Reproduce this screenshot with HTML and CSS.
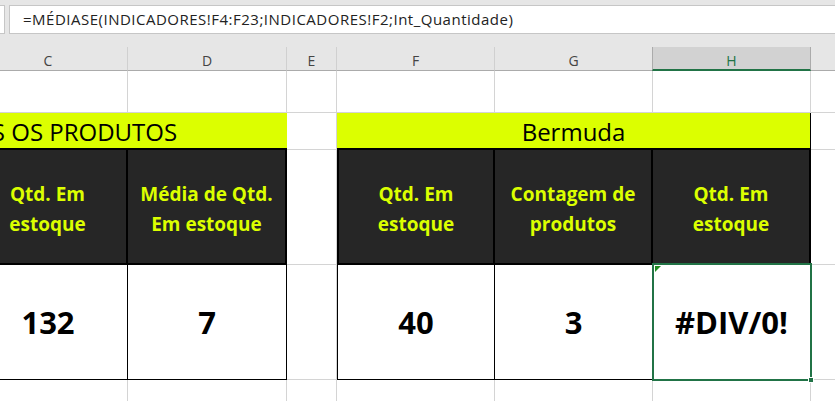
FILE: index.html
```html
<!DOCTYPE html>
<html lang="pt">
<head>
<meta charset="utf-8">
<title>Planilha</title>
<link rel="stylesheet" href="styles.css">
</head>
<body>
<div class="formula-bar">
  <div class="name-box"></div>
  <div class="fx-input">=MÉDIASE(INDICADORES!F4:F23;INDICADORES!F2;Int_Quantidade)</div>
</div>
<div class="viewport">
  <div class="sheet">
    <div class="colhead"></div>
    <div class="colhead">C</div>
    <div class="colhead">D</div>
    <div class="colhead">E</div>
    <div class="colhead">F</div>
    <div class="colhead">G</div>
    <div class="colhead active">H</div>
    <div class="colhead last"></div>

    <div class="cell"></div>
    <div class="cell"></div>
    <div class="cell"></div>
    <div class="cell"></div>
    <div class="cell"></div>
    <div class="cell"></div>
    <div class="cell"></div>
    <div class="cell"></div>

    <div class="title span3 all">TODOS OS PRODUTOS</div>
    <div class="cell gap-title"></div>
    <div class="title span3 boxed">Bermuda</div>
    <div class="cell"></div>

    <div class="head"></div>
    <div class="head">Qtd. Em<br>estoque</div>
    <div class="head">Média de Qtd.<br>Em estoque</div>
    <div class="cell gap"></div>
    <div class="head first">Qtd. Em<br>estoque</div>
    <div class="head">Contagem de<br>produtos</div>
    <div class="head">Qtd. Em<br>estoque</div>
    <div class="cell"></div>

    <div class="val"></div>
    <div class="val">132</div>
    <div class="val">7</div>
    <div class="cell gap"></div>
    <div class="val first">40</div>
    <div class="val">3</div>
    <div class="val selected">#DIV/0!<span class="err-mark"></span><span class="sel-box"></span><span class="fill-handle"></span></div>
    <div class="cell"></div>

    <div class="cell"></div>
    <div class="cell"></div>
    <div class="cell"></div>
    <div class="cell"></div>
    <div class="cell"></div>
    <div class="cell"></div>
    <div class="cell"></div>
    <div class="cell"></div>
  </div>
</div>
</body>
</html>
```

FILE: styles.css
```css
html, body {
  margin: 0;
  padding: 0;
  background: #ffffff;
  overflow: hidden;
  width: 835px;
  height: 401px;
}

body {
  font-family: "Open Sans", "Noto Sans", sans-serif;
}

.formula-bar {
  height: 47px;
  box-sizing: border-box;
  background: #e6e6e6;
  display: flex;
  align-items: flex-start;
  gap: 4px;
  padding-top: 5px;
}

.name-box {
  width: 5px;
  height: 29px;
  box-sizing: border-box;
  background: #ffffff;
  border: 1px solid #c6c6c6;
  border-left: none;
}

.fx-input {
  flex: 1;
  height: 29px;
  box-sizing: border-box;
  background: #ffffff;
  border: 1px solid #c6c6c6;
  border-right: none;
  padding-left: 13px;
  font-size: 15px;
  letter-spacing: 0.5px;
  line-height: 27px;
  color: #222222;
  white-space: nowrap;
}

.viewport {
  overflow: hidden;
  height: 354px;
}

.sheet {
  display: grid;
  grid-template-columns: 150px 159px 159px 50px 158px 158px 158px 120px;
  grid-template-rows: 24px 42px 37px 115px 115px 40px;
  margin-left: -181px;
  width: max-content;
}

.colhead {
  background: #e6e6e6;
  border-right: 1px solid #d0d0d0;
  border-bottom: 1px solid #ababab;
  box-sizing: border-box;
  display: flex;
  align-items: center;
  justify-content: center;
  font-size: 14px;
  color: #444444;
  padding-top: 3px;
}

.colhead.active {
  background: #d2d2d2;
  color: #217346;
  border-right: 1px solid #ababab;
  border-left: 1px solid #ababab;
  border-bottom: 2px solid #217346;
  margin-left: -1px;
  padding-top: 4px;
}

.colhead.last {
  border-right: none;
}

.cell {
  border-right: 1px solid #d4d4d4;
  border-bottom: 1px solid #d4d4d4;
  box-sizing: border-box;
}

.title {
  grid-column: span 3;
  background: #dcff00;
  border-bottom: 2px solid #000000;
  box-sizing: border-box;
  display: flex;
  align-items: center;
  justify-content: center;
  font-size: 24px;
  color: #000000;
  padding-top: 1px;
  white-space: nowrap;
}

.title.all {
  padding-right: 5px;
}

.title.boxed {
  border-right: 1px solid #000000;
}

.head {
  background: #262626;
  border-right: 2px solid #000000;
  border-bottom: 2px solid #000000;
  box-sizing: border-box;
  display: flex;
  align-items: center;
  justify-content: center;
  text-align: center;
  font-weight: 700;
  font-size: 19px;
  line-height: 30px;
  color: #dcff00;
  padding-top: 4px;
}

.head.first {
  border-left: 2px solid #000000;
}

.val {
  position: relative;
  background: #ffffff;
  border-right: 1px solid #000000;
  border-bottom: 1px solid #000000;
  box-sizing: border-box;
  display: flex;
  align-items: center;
  justify-content: center;
  font-weight: 700;
  font-size: 31px;
  color: #000000;
}

.val.first {
  border-left: 1px solid #000000;
}

.sel-box {
  position: absolute;
  left: -1px;
  top: -2px;
  right: -2px;
  bottom: -2px;
  border: 2px solid #217346;
}

.fill-handle {
  position: absolute;
  right: -4px;
  bottom: -4px;
  width: 6px;
  height: 6px;
  background: #217346;
  border: 1px solid #ffffff;
  box-sizing: border-box;
}

.err-mark {
  position: absolute;
  left: 2px;
  top: 1px;
  width: 0;
  height: 0;
  border-top: 6px solid #1e8c1e;
  border-right: 6px solid transparent;
}
```
